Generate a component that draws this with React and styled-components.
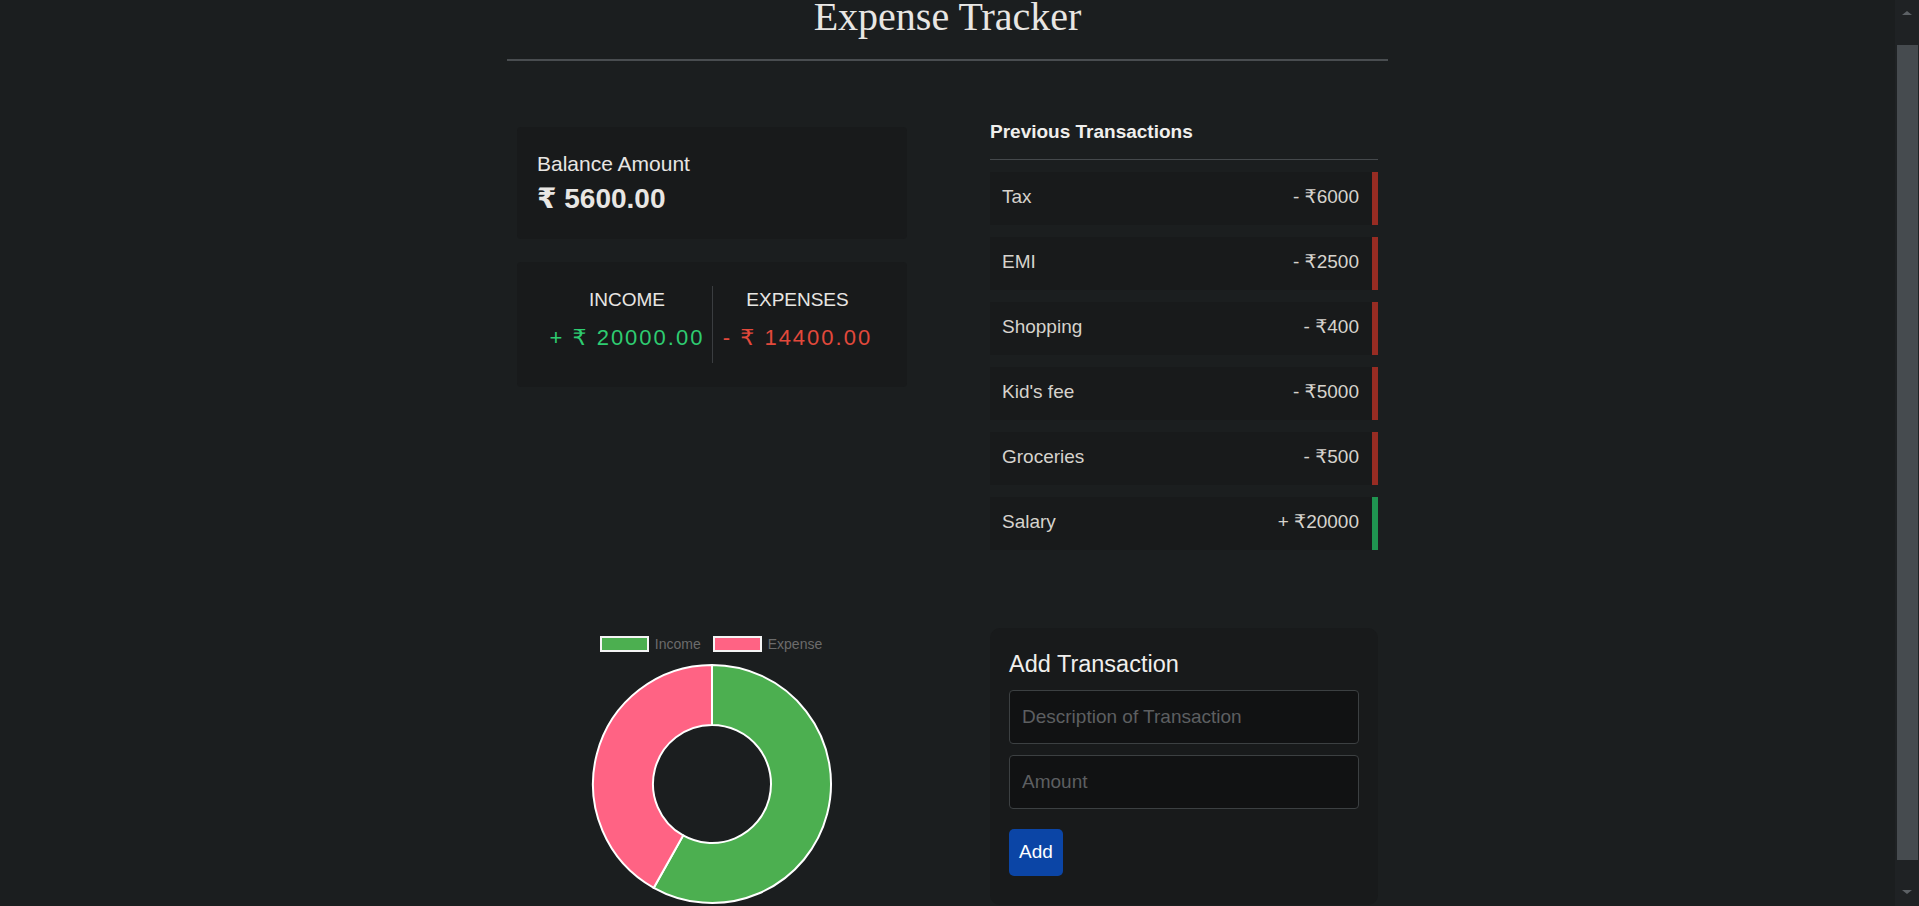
import React from "react";
import styled, { createGlobalStyle } from "styled-components";

const GlobalStyle = createGlobalStyle`
  html, body {
    margin: 0;
    padding: 0;
    height: 906px;
    overflow: hidden;
    background: #1b1e1f;
  }
  body {
    font-family: "Liberation Sans", "DejaVu Sans", Arial, sans-serif;
    color: #e8e6e3;
  }
  * { box-sizing: border-box; }
`;

const Page = styled.div`
  padding-right: 24px;
`;

const Container = styled.div`
  width: 881px;
  margin: 0 auto;
`;

const Title = styled.h1`
  margin: 0;
  font-family: "Liberation Serif", "DejaVu Serif", serif;
  font-weight: 400;
  font-size: 40px;
  line-height: 34px;
  text-align: center;
  color: #e8e6e3;
`;

const Rule = styled.hr`
  margin: 25px 0 0;
  border: 0;
  height: 2px;
  background: #494d50;
`;

const Grid = styled.div`
  display: grid;
  grid-template-columns: 390px 388px;
  justify-content: space-between;
  padding: 0 10px;
  row-gap: 78px;
`;

const LeftTop = styled.div`
  padding-top: 66px;
  display: flex;
  flex-direction: column;
  gap: 23px;
`;

const Card = styled.div`
  background: #181a1b;
  border-radius: ${(p) => p.$radius || 4}px;
`;

const BalanceCard = styled(Card)`
  padding: 25px 20px 24px;
`;

const BalanceLabel = styled.div`
  font-size: 21px;
  line-height: 24px;
`;

const BalanceValue = styled.div`
  margin-top: 7px;
  font-size: 28px;
  line-height: 32px;
  font-weight: 700;
`;

const SplitCard = styled(Card)`
  padding: 24px 25px;
  display: grid;
  grid-template-columns: 1fr 1fr;
`;

const SplitCol = styled.div`
  padding: 0 0 10px;
  text-align: center;
  border-left: ${(p) => (p.$divider ? "1px solid #3a3d40" : "none")};
`;

const SplitLabel = styled.div`
  font-size: 19px;
  line-height: 27px;
  color: #e8e6e3;
`;

const SplitAmount = styled.div`
  margin-top: 10px;
  font-size: 22px;
  line-height: 30px;
  letter-spacing: 2px;
  color: ${(p) => p.$color};
`;

const RightTop = styled.div`
  padding-top: 59.5px;
`;

const ListHeading = styled.h3`
  margin: 0;
  padding-bottom: 17px;
  border-bottom: 1px solid #45494c;
  font-size: 19px;
  line-height: 21px;
  font-weight: 700;
  color: #f0efed;
`;

const List = styled.ul`
  list-style: none;
  margin: 12px 0 0;
  padding: 0;
  display: flex;
  flex-direction: column;
  gap: 12px;
`;

const Row = styled.li`
  height: 53px;
  display: flex;
  justify-content: space-between;
  align-items: center;
  padding: 0 13px 2px 12px;
  background: #181a1b;
  border-right: 6px solid ${(p) => (p.$income ? "#1f9450" : "#972c23")};
  font-size: 19px;
  line-height: 22px;
  color: #d6d3cd;
`;

const ChartWrap = styled.div`
  display: flex;
  flex-direction: column;
  align-items: center;
  padding-top: 8px;
`;

const Legend = styled.div`
  display: flex;
  align-items: center;
  gap: 12px;
  height: 16px;
  transform: translateX(-1px);
`;

const LegendItem = styled.div`
  display: flex;
  align-items: center;
  gap: 6px;
  font-size: 14px;
  color: #6b6b6b;
`;

const Swatch = styled.span`
  display: block;
  width: 49px;
  height: 16px;
  background: ${(p) => p.$color};
  border: 2px solid #f4f4f4;
`;

const DonutSvg = styled.svg`
  display: block;
  margin-top: 11px;
`;

const FormCard = styled(Card)`
  padding: 23px 19px 23px;
  display: flex;
  flex-direction: column;
  align-items: flex-start;
`;

const FormTitle = styled.h3`
  margin: 0;
  font-size: 23.5px;
  line-height: 27px;
  font-weight: 400;
  color: #f0efed;
`;

const Input = styled.input`
  width: 100%;
  height: 54px;
  margin-top: ${(p) => p.$mt}px;
  padding: 0 12px;
  background: #111213;
  border: 1px solid #3c4042;
  border-radius: 4px;
  font-family: inherit;
  font-size: 19px;
  color: #e8e6e3;
  outline: none;
  &::placeholder {
    color: #5d5f61;
  }
`;

const Button = styled.button`
  margin-top: 20px;
  height: 47px;
  padding: 0 10px;
  background: #0b45a6;
  border: 0;
  border-radius: 5px;
  font-family: inherit;
  font-size: 19px;
  color: #fff;
`;

const ScrollTrack = styled.div`
  position: fixed;
  top: 0;
  right: 0;
  width: 24px;
  height: 100vh;
  background: #1f2224;
`;

const ScrollThumb = styled.div`
  position: absolute;
  left: 2px;
  right: 1px;
  top: 45px;
  height: 815px;
  background: #464b4f;
`;

const ScrollArrow = styled.div`
  position: absolute;
  left: 7px;
  width: 0;
  height: 0;
  border-left: 5px solid transparent;
  border-right: 5px solid transparent;
  ${(p) =>
    p.$down
      ? "bottom: 12px; border-top: 4px solid #5c6165;"
      : "top: 11px; border-bottom: 4px solid #5c6165;"}
`;

const transactions = [
  { text: "Tax", amount: -6000 },
  { text: "EMI", amount: -2500 },
  { text: "Shopping", amount: -400 },
  { text: "Kid's fee", amount: -5000 },
  { text: "Groceries", amount: -500 },
  { text: "Salary", amount: 20000 },
];

const income = 20000;
const expense = 14400;

function arcPath(c, R, r, a0, a1) {
  const rad = (d) => (d * Math.PI) / 180;
  const p = (d, rr) => [c + rr * Math.sin(rad(d)), c - rr * Math.cos(rad(d))];
  const large = a1 - a0 > 180 ? 1 : 0;
  const [x0, y0] = p(a0, R);
  const [x1, y1] = p(a1, R);
  const [x2, y2] = p(a1, r);
  const [x3, y3] = p(a0, r);
  return `M${x0} ${y0} A${R} ${R} 0 ${large} 1 ${x1} ${y1} L${x2} ${y2} A${r} ${r} 0 ${large} 0 ${x3} ${y3} Z`;
}

function Donut() {
  const total = income + expense;
  const split = (income / total) * 360;
  const c = 121;
  return (
    <DonutSvg width="242" height="242" viewBox="0 0 242 242">
      <path d={arcPath(c, 119, 59, 0, split)} fill="#4caf50" stroke="#ffffff" strokeWidth="2" />
      <path d={arcPath(c, 119, 59, split, 360)} fill="#ff6384" stroke="#ffffff" strokeWidth="2" />
    </DonutSvg>
  );
}

export default function App() {
  return (
    <>
      <GlobalStyle />
      <Page>
        <Container>
          <Title>Expense Tracker</Title>
          <Rule />
          <Grid>
            <LeftTop>
              <BalanceCard>
                <BalanceLabel>Balance Amount</BalanceLabel>
                <BalanceValue>₹ 5600.00</BalanceValue>
              </BalanceCard>
              <SplitCard>
                <SplitCol>
                  <SplitLabel>INCOME</SplitLabel>
                  <SplitAmount $color="#2ecc71">+ ₹ 20000.00</SplitAmount>
                </SplitCol>
                <SplitCol $divider>
                  <SplitLabel>EXPENSES</SplitLabel>
                  <SplitAmount $color="#e2493b">- ₹ 14400.00</SplitAmount>
                </SplitCol>
              </SplitCard>
            </LeftTop>
            <RightTop>
              <ListHeading>Previous Transactions</ListHeading>
              <List>
                {transactions.map((t) => (
                  <Row key={t.text} $income={t.amount > 0}>
                    <span>{t.text}</span>
                    <span>
                      {t.amount > 0 ? "+" : "-"} ₹{Math.abs(t.amount)}
                    </span>
                  </Row>
                ))}
              </List>
            </RightTop>
            <ChartWrap>
              <Legend>
                <LegendItem>
                  <Swatch $color="#4caf50" />
                  Income
                </LegendItem>
                <LegendItem>
                  <Swatch $color="#ff6384" />
                  Expense
                </LegendItem>
              </Legend>
              <Donut />
            </ChartWrap>
            <FormCard $radius={10}>
              <FormTitle>Add Transaction</FormTitle>
              <Input $mt={12} placeholder="Description of Transaction" />
              <Input $mt={11} placeholder="Amount" />
              <Button>Add</Button>
            </FormCard>
          </Grid>
        </Container>
      </Page>
      <ScrollTrack>
        <ScrollArrow />
        <ScrollThumb />
        <ScrollArrow $down />
      </ScrollTrack>
    </>
  );
}
